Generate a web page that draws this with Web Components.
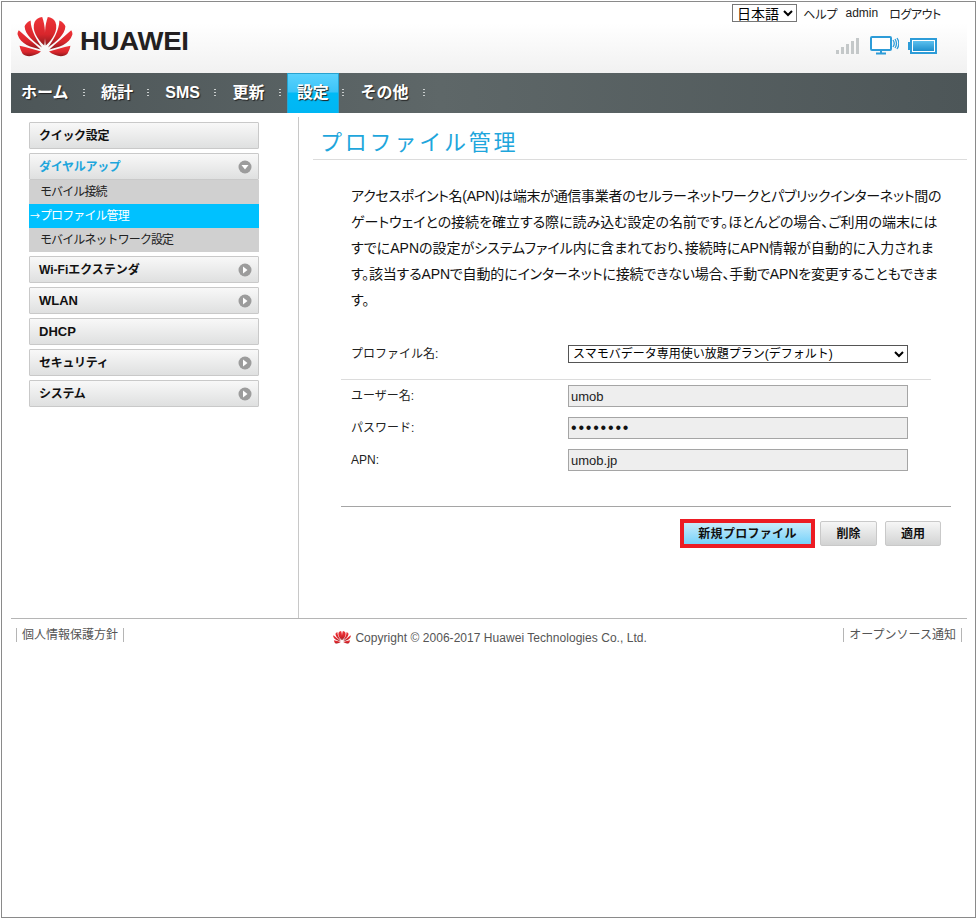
<!DOCTYPE html>
<html lang="ja">
<head>
<meta charset="utf-8">
<title>プロファイル管理</title>
<style>
    html, body { margin: 0; padding: 0; background: #fff; }
    body { font-family: "Liberation Sans", "Noto Sans CJK JP", sans-serif; font-size: 12px; color: #000; }
</style>
</head>
<body>
<hw-app>
    <hw-header slot="header"></hw-header>
    <hw-nav slot="nav"></hw-nav>
    <hw-sidebar slot="side">
        <hw-menu-item kana>クイック設定</hw-menu-item>
        <hw-menu-group>
            <hw-menu-item slot="head" arrow="down" active kana>ダイヤルアップ</hw-menu-item>
            <hw-sub-item>モバイル接続</hw-sub-item>
            <hw-sub-item selected>プロファイル管理</hw-sub-item>
            <hw-sub-item>モバイルネットワーク設定</hw-sub-item>
        </hw-menu-group>
        <hw-menu-item arrow="right" kana style="letter-spacing: 0">Wi-Fiエクステンダ</hw-menu-item>
        <hw-menu-item arrow="right">WLAN</hw-menu-item>
        <hw-menu-item>DHCP</hw-menu-item>
        <hw-menu-item arrow="right" kana>セキュリティ</hw-menu-item>
        <hw-menu-item arrow="right" kana>システム</hw-menu-item>
    </hw-sidebar>
    <hw-profile-page slot="main"></hw-profile-page>
    <hw-footer slot="footer"></hw-footer>
</hw-app>

<script>
(function() {
    'use strict';

    const FONT = '"Liberation Sans", "Noto Sans CJK JP", sans-serif';

    // petals of the logo, left half only; the right half is mirrored
    const PETALS = `
        <path d="M27.2 28.5C20 22 14.5 13 17.6 5 19 2 22 .4 25.2 0c3 8 3.6 19 2 28.5z"/>
        <path d="M25 30.5C17 25 8 18 7.6 9.6 8 7.4 10 5 13.6 3.4 14 14 19.6 22.5 25 30.5z"/>
        <path d="M23.6 32.4C14.4 30 3.6 27.6.6 17.4.4 15.8 1 14.4 1.8 13.2 8 19 17 26 23.6 32.4z"/>
        <path d="M24 34.6C18 39.4 9.4 41 5.4 36.4 4.4 34.4 3 32 2.6 28.8 10 30.4 17.4 32.4 24 34.6z"/>`;

    class HwLogo extends HTMLElement {
        constructor() {
            super();
            const size = this.getAttribute('size') || '56';
            this.attachShadow({ mode: 'open' }).innerHTML = `
                <style>:host { display: block; line-height: 0; }</style>
                <svg width="${size}" viewBox="0 0 56 41">
                    <defs>
                        <linearGradient id="red" x1="0" y1="0" x2="0" y2="1">
                            <stop offset="0" stop-color="#ee3338"/>
                            <stop offset=".6" stop-color="#d9262c"/>
                            <stop offset="1" stop-color="#8e1a1e"/>
                        </linearGradient>
                        <g id="half" fill="url(#red)">${PETALS}</g>
                    </defs>
                    <use href="#half"/>
                    <use href="#half" transform="translate(56 0) scale(-1 1)"/>
                </svg>`;
        }
    }

    class HwApp extends HTMLElement {
        constructor() {
            super();
            this.attachShadow({ mode: 'open' }).innerHTML = `
                <style>
                    :host { display: block; box-sizing: border-box; width: 975px; height: 917px; margin: 1px 0 0 1px; border: 1px solid #8a8a8a; font-family: ${FONT}; }
                    .wrap { margin: 0 8px 0 9px; }
                    .body { display: flex; height: 505px; }
                    .side { width: 287px; box-sizing: border-box; padding: 9px 0 0 18px; }
                    .main { flex: 1; min-width: 0; margin-top: 4px; border-left: 1px solid #c8c8c8; }
                </style>
                <div class="wrap">
                    <slot name="header"></slot>
                    <slot name="nav"></slot>
                    <div class="body">
                        <div class="side"><slot name="side"></slot></div>
                        <div class="main"><slot name="main"></slot></div>
                    </div>
                    <slot name="footer"></slot>
                </div>`;
        }
    }

    class HwHeader extends HTMLElement {
        constructor() {
            super();
            this.attachShadow({ mode: 'open' }).innerHTML = `
                <style>
                    :host { display: flex; justify-content: space-between; box-sizing: border-box; height: 71px; background: linear-gradient(#fff 0, #fff 30%, #f1f1f1 100%); }
                    .brand { display: flex; align-items: flex-start; gap: 7px; padding: 15px 0 0 6px; }
                    .name { font: 700 25px/1 ${FONT}; color: #231f20; margin-top: 12px; letter-spacing: -.2px; transform: scaleX(1.1); transform-origin: left; }
                    .right { display: flex; flex-direction: column; align-items: flex-end; padding: 2px 26px 0 0; }
                    .links { display: flex; align-items: center; font-size: 12px; color: #222; font-feature-settings: "palt"; }
                    select { width: 65px; height: 18px; margin-right: 6px; font: 14px ${FONT}; color: #000; background: #fff; border: 1px solid #767676; border-radius: 0; padding: 0; }
                    .links span:nth-of-type(2) { margin-left: 8px; }
                    .links span:nth-of-type(3) { margin-left: 11px; letter-spacing: -.4px; }
                    .status { display: flex; align-items: center; gap: 9px; margin-top: 14px; padding-right: 4px; }
                    svg { display: block; }
                </style>
                <div class="brand">
                    <hw-logo size="56"></hw-logo>
                    <div class="name">HUAWEI</div>
                </div>
                <div class="right">
                    <div class="links">
                        <select><option>日本語</option></select>
                        <span>ヘルプ</span><span>admin</span><span>ログアウト</span>
                    </div>
                    <div class="status">
                        <svg width="26" height="18" viewBox="0 0 26 18" fill="#c4c8c9">
                            <rect x="1" y="13" width="3" height="4"/>
                            <rect x="6" y="10" width="3" height="7"/>
                            <rect x="11" y="7" width="3" height="10"/>
                            <rect x="16" y="4" width="3" height="13"/>
                            <rect x="21" y="1" width="3" height="16"/>
                        </svg>
                        <svg width="29" height="19" viewBox="0 0 29 19" fill="none" stroke="#2d9cd8">
                            <rect x="1" y="1" width="20" height="13" rx="1" stroke-width="2" fill="#fff"/>
                            <path d="M11 15v2M6 17.500h10" stroke-width="2"/>
                            <path d="M23 4c1.400 2 1.400 5 0 7M25 3c2 3 2 6 0 9M27 2c2.400 3.600 2.400 7.400 0 11" stroke-width="1.300"/>
                        </svg>
                        <svg width="29" height="16" viewBox="0 0 29 16">
                            <defs>
                                <linearGradient id="cell" x1="0" y1="0" x2="0" y2="1">
                                    <stop offset="0" stop-color="#5cc0ee"/>
                                    <stop offset="1" stop-color="#1d8fcd"/>
                                </linearGradient>
                            </defs>
                            <rect x="0" y="4" width="3" height="8" fill="#2d9cd8"/>
                            <rect x="3" y="1" width="25" height="14" fill="#fff" stroke="#2d9cd8" stroke-width="2"/>
                            <rect x="5" y="3" width="21" height="10" fill="url(#cell)"/>
                        </svg>
                    </div>
                </div>`;
        }
    }

    class HwNav extends HTMLElement {
        constructor() {
            super();
            const items = ['ホーム', '統計', 'SMS', '更新', '設定', 'その他'];
            const html = items.map(t => `
                <a class="${t === '設定' ? 'on' : ''}">${t}</a><i></i>`).join('');
            this.attachShadow({ mode: 'open' }).innerHTML = `
                <style>
                    :host { display: flex; align-items: stretch; height: 40px; background: linear-gradient(90deg, #4d5658, #5e6768 45%, #4d5658 100%); }
                    a { display: flex; align-items: center; padding: 0 10px 1px; font: 700 16px/1 ${FONT}; color: #fff; text-shadow: 1px 1px 1px #222; }
                    a.on { background: linear-gradient(#5ad2fd 0, #3cc4f8 45%, #00baf6 50%, #00b6f3 100%); border: 1px solid #29a2cf; border-width: 1px 1px 0 1px; padding: 0 9px 1px; margin-right: -.8px; }
                    i { width: 2px; height: 9px; margin: 16px 6px 0 4.4px; background: repeating-linear-gradient(#c9cdcd 0 1px, transparent 1px 3px); }
                </style>
                ${html}`;
        }
    }

    class HwSidebar extends HTMLElement {
        constructor() {
            super();
            this.attachShadow({ mode: 'open' }).innerHTML = `
                <style>:host { display: flex; flex-direction: column; gap: 4px; width: 230px; font-feature-settings: "palt"; }</style>
                <slot></slot>`;
        }
    }

    class HwMenuItem extends HTMLElement {
        constructor() {
            super();
            const arrow = this.getAttribute('arrow');
            const glyph = arrow === 'down'
                ? '<path d="M3.500 5h7L7 9.500z" fill="#fff"/>'
                : '<path d="M5 3.500v7L9.500 7z" fill="#fff"/>';
            const icon = arrow ? `<svg width="14" height="14" viewBox="0 0 14 14"><circle cx="7" cy="7" r="6.500" fill="#9c9c9c"/>${glyph}</svg>` : '';
            this.attachShadow({ mode: 'open' }).innerHTML = `
                <style>
                    :host { display: flex; align-items: center; justify-content: space-between; box-sizing: border-box; height: 27px; padding: 0 6px 0 9px; border: 1px solid #c9c9c9; border-radius: 1px; background: linear-gradient(#f8f8f8, #dfe0e0); font: 700 13px/1 ${FONT}; color: #111; }
                    :host([kana]) { font-size: 12px; letter-spacing: -.3px; }
                    :host([active]) { color: #1ea6dc; }
                    svg { display: block; }
                </style>
                <span><slot></slot></span>${icon}`;
        }
    }

    class HwMenuGroup extends HTMLElement {
        constructor() {
            super();
            this.attachShadow({ mode: 'open' }).innerHTML = `
                <style>:host { display: block; } .sub { background: #d0d0d0; }</style>
                <slot name="head"></slot>
                <div class="sub"><slot></slot></div>`;
        }
    }

    class HwSubItem extends HTMLElement {
        constructor() {
            super();
            const selected = this.hasAttribute('selected');
            this.attachShadow({ mode: 'open' }).innerHTML = `
                <style>
                    :host { display: flex; align-items: center; box-sizing: border-box; height: 24px; padding-left: 11px; font: 12px/1 ${FONT}; letter-spacing: -.9px; color: #222; }
                    :host([selected]) { padding-left: 1px; background: #00c1ff; color: #fff; }
                    span { width: 10px; font-family: "Noto Sans CJK JP", sans-serif; font-size: 10px; }
                </style>
                ${selected ? '<span>→</span>' : ''}<slot></slot>`;
        }
    }

    class HwFormRow extends HTMLElement {
        constructor() {
            super();
            this.attachShadow({ mode: 'open' }).innerHTML = `
                <style>
                    :host { display: grid; grid-template-columns: 217px 340px; align-items: center; font: 12px/1 ${FONT}; color: #222; }
                    ::slotted(*) { box-sizing: border-box; width: 340px; }
                </style>
                <label>${this.getAttribute('label')}</label>
                <slot></slot>`;
        }
    }

    class HwButton extends HTMLElement {
        constructor() {
            super();
            this.attachShadow({ mode: 'open' }).innerHTML = `
                <style>
                    :host { display: flex; align-items: center; justify-content: center; box-sizing: border-box; height: 25px; border: 1px solid #c9c9c9; border-radius: 2px; background: linear-gradient(#f6f6f6, #d2d3d3); font: 700 12px/1 ${FONT}; color: #111; }
                    :host([primary]) { height: 29px; border: 4px solid #ec1c24; border-radius: 0; background: linear-gradient(#c9ecfb, #76d2fa); letter-spacing: .3px; }
                </style>
                <slot></slot>`;
        }
    }

    class HwProfilePage extends HTMLElement {
        constructor() {
            super();
            this.attachShadow({ mode: 'open' }).innerHTML = `
                <style>
                    :host { display: block; padding: 9px 0 0 14px; font-family: ${FONT}; }
                    h1 { margin: 0 0 0 7px; font: 400 22px/28px "Noto Sans CJK JP", sans-serif; color: #1ea6dc; letter-spacing: 2.800px; }
                    .rule { height: 1px; margin: 5px 0 0 0; background: #dcdcdc; }
                    p { margin: 23px 0 0 38px; width: 620px; white-space: nowrap; font-size: 14px; line-height: 26px; color: #111; font-feature-settings: "palt"; }
                    p span { display: block; }
                    form { margin: 0; }
                    .first { margin: 32px 0 0 38px; }
                    .sep { height: 1px; width: 590px; margin: 16px 0 5px 28px; background: #dcdcdc; }
                    .rows { display: flex; flex-direction: column; gap: 10px; margin-left: 38px; }
                    select { height: 18px; font: 12px ${FONT}; letter-spacing: 0; color: #000; background: #fff; border: 1px solid #555; border-radius: 0; padding: 0; }
                    input { height: 22px; font: 13px ${FONT}; color: #222; background: #eee; border: 1px solid #a5a5a5; border-radius: 0; padding: 0 2px; margin: 0; outline: 0; }
                    input[type=password] { font-size: 16px; letter-spacing: 1.800px; color: #111; }
                    .line { width: 610px; height: 1px; margin: 35px 0 0 28px; background: #a5a5a5; }
                    .actions { display: flex; align-items: center; gap: 8px; width: 600px; margin: 12px 0 0 28px; justify-content: flex-end; }
                    .actions hw-button:nth-child(1) { width: 135px; margin-right: -3px; }
                    .actions hw-button:nth-child(2) { width: 57px; }
                    .actions hw-button:nth-child(3) { width: 56px; }
                </style>
                <h1>プロファイル管理</h1>
                <div class="rule"></div>
                <p>
                    <span style="letter-spacing: -.28px">アクセスポイント名(APN)は端末が通信事業者のセルラーネットワークとパブリックインターネット間の</span>
                    <span style="letter-spacing: -.02px">ゲートウェイとの接続を確立する際に読み込む設定の名前です。ほとんどの場合、ご利用の端末には</span>
                    <span>すでにAPNの設定がシステムファイル内に含まれており、接続時にAPN情報が自動的に入力されま</span>
                    <span style="letter-spacing: -.16px">す。該当するAPNで自動的にインターネットに接続できない場合、手動でAPNを変更することもできま</span>
                    <span>す。</span>
                </p>
                <form>
                    <hw-form-row class="first" label="プロファイル名:">
                        <select><option>スマモバデータ専用使い放題プラン(デフォルト)</option></select>
                    </hw-form-row>
                    <div class="sep"></div>
                    <div class="rows">
                        <hw-form-row label="ユーザー名:"><input type="text" value="umob" disabled></hw-form-row>
                        <hw-form-row label="パスワード:"><input type="password" value="password" disabled></hw-form-row>
                        <hw-form-row label="APN:"><input type="text" value="umob.jp" disabled></hw-form-row>
                    </div>
                    <div class="line"></div>
                    <div class="actions">
                        <hw-button primary>新規プロファイル</hw-button>
                        <hw-button>削除</hw-button>
                        <hw-button>適用</hw-button>
                    </div>
                </form>`;
        }
    }

    class HwFooter extends HTMLElement {
        constructor() {
            super();
            this.attachShadow({ mode: 'open' }).innerHTML = `
                <style>
                    :host { display: flex; justify-content: space-between; align-items: flex-start; height: 40px; border-top: 1px solid #b5b5b5; font: 12px/1 ${FONT}; color: #555; }
                    .link { margin: 9px 5px 0 5px; padding: 0 5px; height: 14px; line-height: 14px; border: solid #b5b5b5; border-width: 0 1px; }
                    .copy { display: flex; align-items: center; gap: 4px; margin: 12px 0 0 13px; letter-spacing: .04px; }
                </style>
                <span class="link">個人情報保護方針</span>
                <span class="copy"><hw-logo size="18"></hw-logo>Copyright © 2006-2017 Huawei Technologies Co., Ltd.</span>
                <span class="link">オープンソース通知</span>`;
        }
    }

    customElements.define('hw-logo', HwLogo);
    customElements.define('hw-app', HwApp);
    customElements.define('hw-header', HwHeader);
    customElements.define('hw-nav', HwNav);
    customElements.define('hw-sidebar', HwSidebar);
    customElements.define('hw-menu-item', HwMenuItem);
    customElements.define('hw-menu-group', HwMenuGroup);
    customElements.define('hw-sub-item', HwSubItem);
    customElements.define('hw-form-row', HwFormRow);
    customElements.define('hw-button', HwButton);
    customElements.define('hw-profile-page', HwProfilePage);
    customElements.define('hw-footer', HwFooter);
})();
</script>
</body>
</html>
